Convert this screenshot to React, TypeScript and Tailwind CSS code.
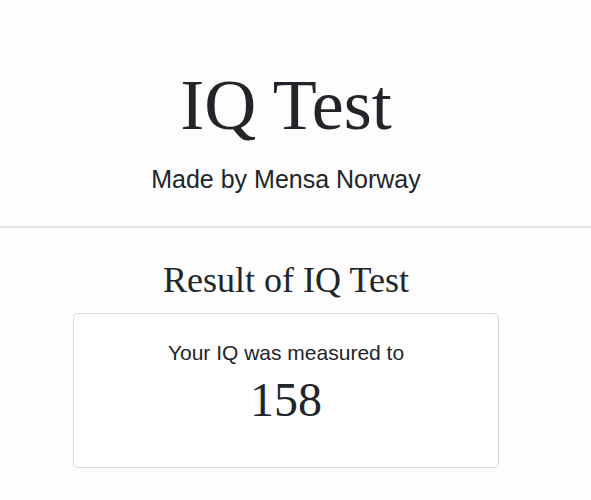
const serif = { fontFamily: '"Liberation Serif", "Times New Roman", serif' }

const App = () => {
  return (
    <div
      className="min-h-[500px] w-full bg-[#fdfdfd] text-[#212529]"
      style={{ fontFamily: '"Liberation Sans", Arial, sans-serif' }}
    >
      <header className="flex flex-col items-center pr-[19px] pt-[65px] pb-[33px]">
        <h1 className="text-[72px] leading-[80px]" style={serif}>
          IQ Test
        </h1>
        <p className="mt-[20px] text-[25px] leading-[28px]">Made by Mensa Norway</p>
      </header>
      <hr className="border-0 border-t-2 border-[#e6e6e6]" />
      <main className="flex flex-col items-center pr-[19px] pt-[30px]">
        <h2 className="text-[36px] leading-[44px]" style={serif}>
          Result of IQ Test
        </h2>
        <div className="mt-[11px] flex h-[155px] w-[426px] flex-col items-center rounded-[5px] border border-[#dadada] bg-white pt-[27px]">
          <p className="text-[21px] leading-[24px]">Your IQ was measured to</p>
          <p className="mt-[7px] text-[48px] leading-[56px]" style={serif}>
            158
          </p>
        </div>
      </main>
    </div>
  )
}

export default App
